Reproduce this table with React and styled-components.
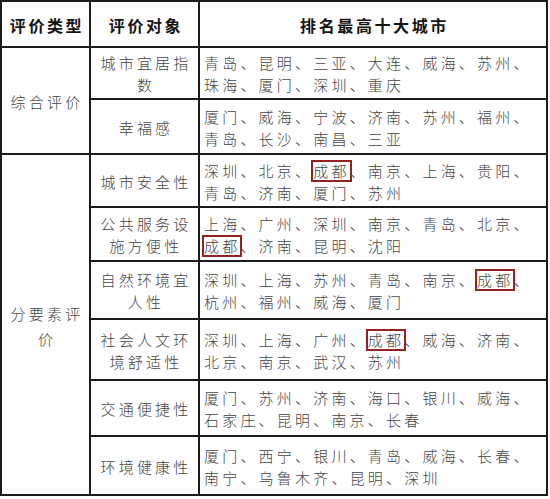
import React from "react";
import styled, { createGlobalStyle } from "styled-components";

const Global = createGlobalStyle`
  html, body { margin: 0; padding: 0; background: #ffffff; }
  body { font-family: "Noto Sans CJK SC", sans-serif; }
`;

const Table = styled.div`
  display: grid;
  grid-template-columns: 87px 107px 346px;
  grid-template-rows: 44px 50px 53px 51px 52px 56px 59px 54px 57px;
  gap: 2px;
  padding: 2px;
  background: #1c1c1c;
  width: max-content;
`;

const Cell = styled.div`
  background: #ffffff;
  display: flex;
  align-items: center;
  justify-content: ${(p) => (p.$left ? "flex-start" : "center")};
  text-align: ${(p) => (p.$left ? "left" : "center")};
  padding: ${(p) => (p.$left ? "2px 6px 0 4px" : "2px 0 0 3px")};
  grid-row: ${(p) => (p.$span ? `span ${p.$span}` : "auto")};
  box-sizing: border-box;
  min-width: 0;
`;

const Head = styled.div`
  font-family: "Noto Sans CJK SC", sans-serif;
  font-weight: 700;
  font-size: 16px;
  letter-spacing: 2.6px;
  color: #141414;
  line-height: 22px;
`;

const Body = styled.div`
  font-family: "Noto Sans CJK SC", sans-serif;
  font-weight: 300;
  font-size: 15px;
  letter-spacing: 3.2px;
  color: #444444;
  line-height: ${(p) => (p.$tall ? "25px" : "22px")};
`;

const Mark = styled.span`
  display: inline-block;
  height: 18px;
  line-height: 18px;
  vertical-align: top;
  margin-top: 2px;
  outline: 2px solid #952222;
  outline-offset: 0;
`;

const groups = [
  {
    name: "综合评价",
    items: [
      { t: "城市宜居指数", c: ["青岛", "昆明", "三亚", "大连", "威海", "苏州", "珠海", "厦门", "深圳", "重庆"] },
      { t: "幸福感", c: ["厦门", "威海", "宁波", "济南", "苏州", "福州", "青岛", "长沙", "南昌", "三亚"] },
    ],
  },
  {
    name: "分要素评价",
    items: [
      { t: "城市安全性", c: ["深圳", "北京", "成都", "南京", "上海", "贵阳", "青岛", "济南", "厦门", "苏州"] },
      { t: "公共服务设施方便性", c: ["上海", "广州", "深圳", "南京", "青岛", "北京", "成都", "济南", "昆明", "沈阳"] },
      { t: "自然环境宜人性", c: ["深圳", "上海", "苏州", "青岛", "南京", "成都", "杭州", "福州", "威海", "厦门"] },
      { t: "社会人文环境舒适性", c: ["深圳", "上海", "广州", "成都", "威海", "济南", "北京", "南京", "武汉", "苏州"] },
      { t: "交通便捷性", c: ["厦门", "苏州", "济南", "海口", "银川", "威海", "石家庄", "昆明", "南京", "长春"] },
      { t: "环境健康性", c: ["厦门", "西宁", "银川", "青岛", "威海", "长春", "南宁", "乌鲁木齐", "昆明", "深圳"] },
    ],
  },
];

function Cities({ list }) {
  return (
    <Body>
      {list.map((city, i) => (
        <React.Fragment key={i}>
          {city === "成都" ? <Mark>{city}</Mark> : city}
          {i < list.length - 1 ? "、" : ""}
        </React.Fragment>
      ))}
    </Body>
  );
}

export default function App() {
  return (
    <>
      <Global />
      <Table>
        <Cell><Head>评价类型</Head></Cell>
        <Cell><Head>评价对象</Head></Cell>
        <Cell><Head>排名最高十大城市</Head></Cell>
        {groups.map((g) =>
          g.items.map((it, idx) => (
            <React.Fragment key={g.name + idx}>
              {idx === 0 && (
                <Cell $span={g.items.length}>
                  <Body $tall>{g.name}</Body>
                </Cell>
              )}
              <Cell><Body>{it.t}</Body></Cell>
              <Cell $left><Cities list={it.c} /></Cell>
            </React.Fragment>
          ))
        )}
      </Table>
    </>
  );
}
